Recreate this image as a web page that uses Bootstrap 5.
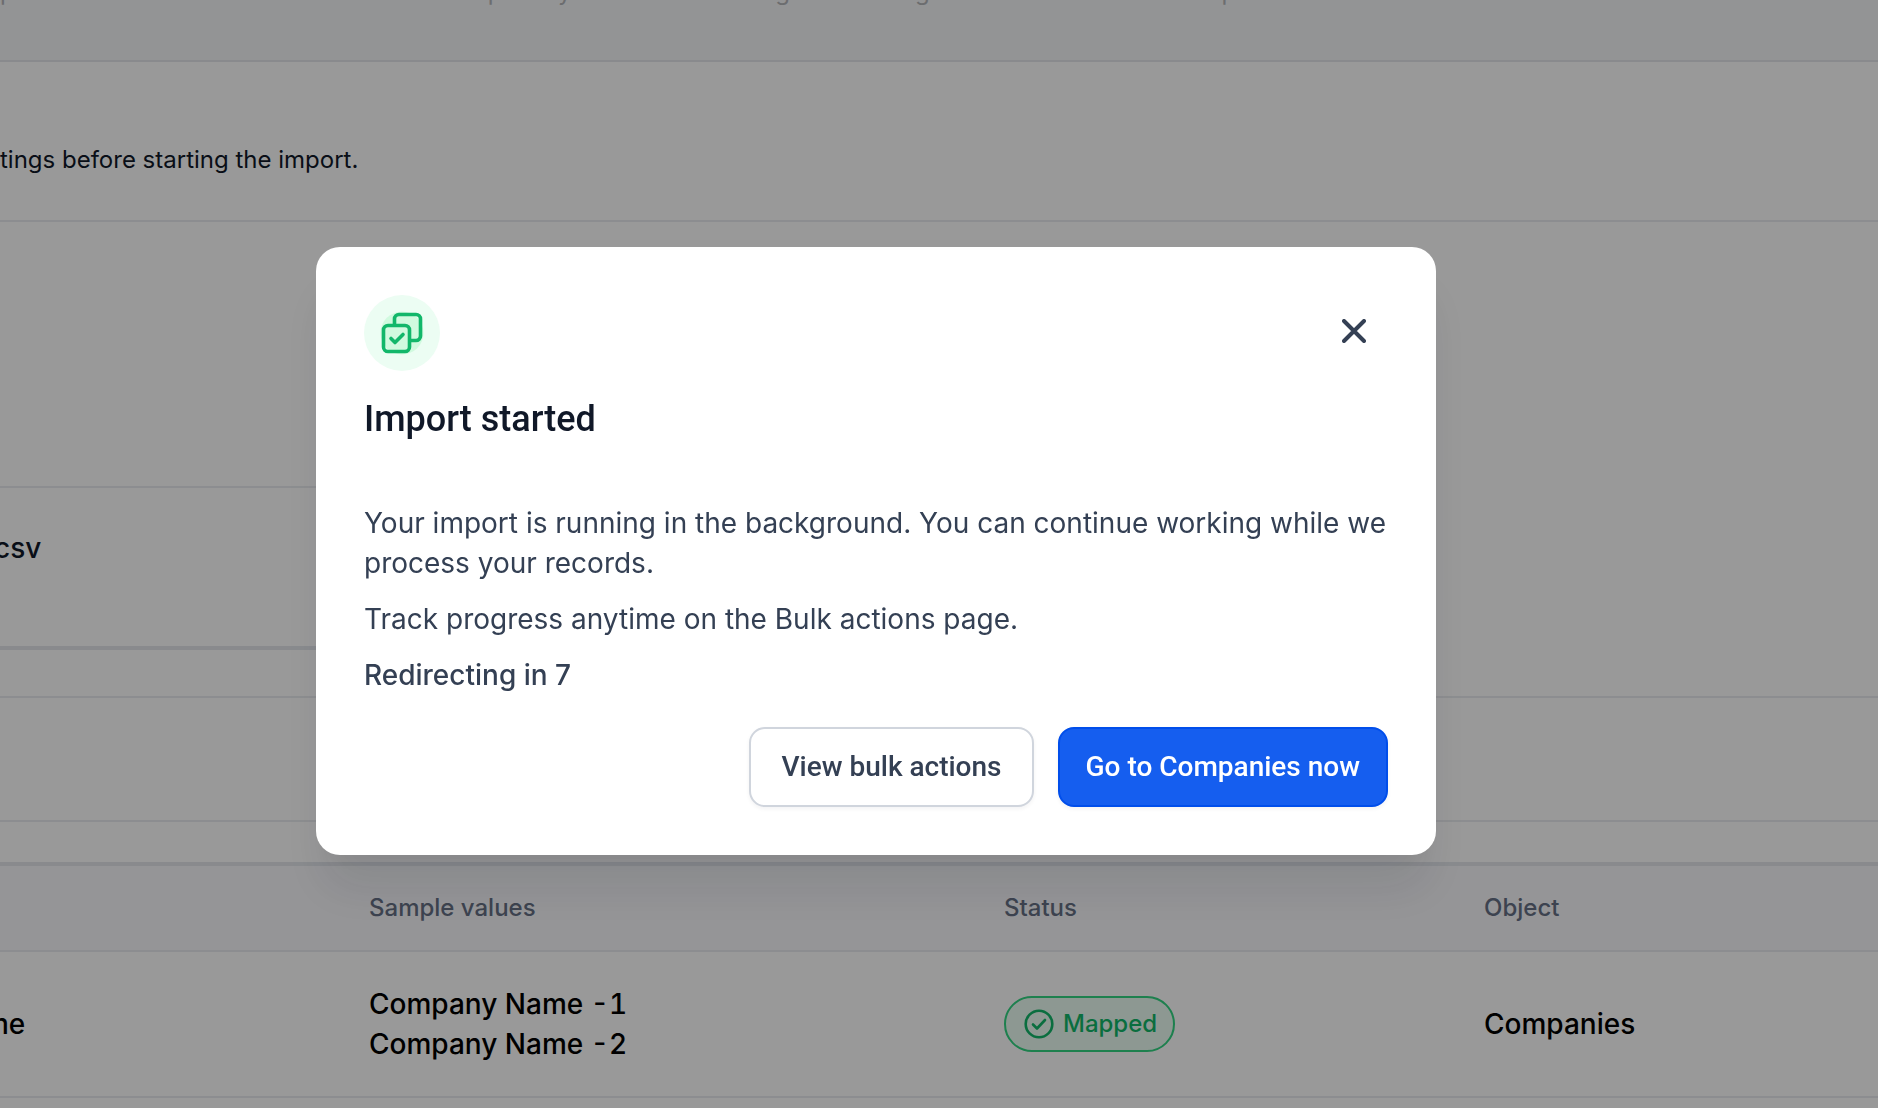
<!DOCTYPE html>
<html lang="en">
<head>
<meta charset="utf-8">
<meta name="viewport" content="width=device-width, initial-scale=1">
<title>Import started</title>
<link href="https://cdn.jsdelivr.net/npm/bootstrap@5.3.0/dist/css/bootstrap.min.css" rel="stylesheet">
<style>
  :root { --ink: #101828; --slate: #344054; --line: #eaecf0; --line-strong: #e4e7ec; }
  html, body { height: 100%; overflow: hidden; }
  body { font-family: Inter, "Open Sans", sans-serif; font-size: 28px; line-height: 40px; color: #000; background: #fff; }
  .import-page { min-height: 100%; }
  .step-bar { height: 62px; overflow: hidden; background: #f6f7f9; border-bottom: 2px solid var(--line-strong); font-size: 24px; line-height: 36px; color: #b4b6ba; }
  .step-track { margin-top: -26px; }
  .step-label { white-space: nowrap; }
  .step-one { width: 470px; }
  .step-two { width: 724px; }
  .intro { height: 160px; padding-top: 80px; border-bottom: 2px solid var(--line); font-size: 24px; line-height: 36px; color: var(--ink); }
  .file-panel { width: 800px; height: 428px; padding-top: 264px; border-bottom: 4px solid var(--line-strong); }
  .file-name { height: 160px; padding-top: 40px; border-top: 2px solid var(--line); font-weight: 500; color: var(--ink); }
  .file-name span { margin-left: -6px; }
  .source-name { margin-left: -16px; }
  .filter-strip { height: 126px; margin-top: 46px; border-top: 2px solid var(--line); border-bottom: 2px solid var(--line); }
  .map-table { margin: 40px 0 0; table-layout: fixed; border-top: 4px solid var(--line-strong); --bs-table-color: #000; }
  .map-table th, .map-table td { border-bottom: 2px solid var(--line); padding: 0; vertical-align: middle; font-weight: 500; }
  .map-table th { height: 87px; background: #f8f9fc; color: #667085; font-size: 24px; line-height: 36px; }
  .map-table td { height: 146px; font-variant-numeric: tabular-nums; }
  .col-source { width: 369px; } .col-sample { width: 635px; } .col-status { width: 480px; }
  .status-pill { border: 2px solid #32d583; background: #ecfdf3; color: #12b76a; border-radius: 28px; height: 56px; padding: 0 16px 0 17px; gap: 8px; font-size: 24px; line-height: 36px; }
  .scrim { --bs-backdrop-opacity: .4; }
  .import-modal { --bs-modal-width: 1120px; --bs-modal-margin: 247px; }
  .import-modal .modal-dialog { margin-left: 316px; }
  .import-modal .modal-content { border: 0; border-radius: 24px; padding: 48px; box-shadow: 0 40px 48px -8px rgba(16,24,40,.1), 0 16px 16px -8px rgba(16,24,40,.04); color: var(--slate); }
  .icon-disc { width: 76px; height: 76px; }
  .close-x { width: 40px; height: 40px; margin: 16px 14px 0 0; color: var(--slate); }
  .modal-heading { font-family: Roboto, sans-serif; font-size: 36px; line-height: 56px; font-weight: 500; color: var(--ink); margin: 20px 0 56px; }
  .copy p { margin-bottom: 16px; }
  .actions { gap: 24px; margin-top: 32px; }
  .actions .btn { font-family: Roboto, sans-serif; font-size: 28px; line-height: 40px; font-weight: 500; border-width: 2px; border-radius: 16px; padding: 18px 30px; box-shadow: 0 2px 4px rgba(16,24,40,.05); }
  .btn-plain { background: #fff; color: var(--slate); border-color: #d0d5dd; }
  .actions .btn-go { background: #155eef; color: #fff; border-color: #004eeb; padding: 18px 26px; }
</style>
<script src="https://cdn.jsdelivr.net/npm/bootstrap@5.3.0/dist/js/bootstrap.bundle.min.js"></script>
</head>
<body>
<main class="import-page">
  <header class="step-bar">
    <div class="step-track d-flex">
      <span class="step-label step-one">ports</span>
      <span class="step-label step-two">Upload your file to matching data settings</span>
      <span class="step-label">Import</span>
    </div>
  </header>
  <div class="intro">tings before starting the import.</div>
  <section class="file-panel"><div class="file-name"><span>csv</span></div></section>
  <div class="filter-strip"></div>
  <table class="table map-table">
    <colgroup><col class="col-source"><col class="col-sample"><col class="col-status"><col></colgroup>
    <thead><tr><th></th><th scope="col">Sample values</th><th scope="col">Status</th><th scope="col">Object</th></tr></thead>
    <tbody><tr>
      <td><span class="source-name">me</span></td>
      <td>Company Name -1<br>Company Name -2</td>
      <td><span class="status-pill d-inline-flex align-items-center">
        <svg width="32" height="32" viewBox="0 0 32 32" fill="none" stroke="currentColor" stroke-width="2.6" stroke-linecap="round" stroke-linejoin="round" aria-hidden="true"><circle cx="16" cy="16" r="13.3"/><path d="M10 16.5l4 4 8-8.5"/></svg>Mapped</span></td>
      <td>Companies</td>
    </tr></tbody>
  </table>
</main>

<div class="modal-backdrop show scrim"></div>
<div class="modal d-block import-modal" role="dialog" aria-modal="true" aria-labelledby="importHeading">
  <div class="modal-dialog">
    <div class="modal-content">
      <div class="d-flex justify-content-between align-items-start">
        <svg class="icon-disc" viewBox="0 0 76 76" fill="none" aria-hidden="true">
          <circle cx="38" cy="38" r="38" fill="#ecfdf3"/><circle cx="38" cy="38" r="21.5" fill="#d1fadf"/>
          <g stroke="#12b76a" stroke-width="3.6" stroke-linecap="round" stroke-linejoin="round">
            <path d="M30.5 30V24a4.500 4.500 0 0 1 4.500-4.500H52a4.500 4.500 0 0 1 4.500 4.500V41a4.500 4.500 0 0 1-4.500 4.500H46"/>
            <rect x="19.500" y="30.500" width="26" height="26" rx="4.500"/><path d="M27 43.500l4 4 8-8"/>
          </g>
        </svg>
        <button type="button" class="btn p-0 border-0 close-x d-flex align-items-center justify-content-center" aria-label="Close">
          <svg width="24" height="24" viewBox="0 0 24 24" fill="none" stroke="currentColor" stroke-width="4" stroke-linecap="round" aria-hidden="true"><path d="M2 2l20 20M22 2L2 22"/></svg>
        </button>
      </div>
      <h1 class="modal-heading" id="importHeading">Import started</h1>
      <div class="copy">
        <p>Your import is running in the background. You can continue working while we process your records.</p>
        <p>Track progress anytime on the Bulk actions page.</p>
        <p class="fw-medium mb-0">Redirecting in 7</p>
      </div>
      <div class="actions d-flex justify-content-end">
        <button type="button" class="btn btn-plain">View bulk actions</button>
        <button type="button" class="btn btn-go">Go to Companies now</button>
      </div>
    </div>
  </div>
</div>
</body>
</html>
